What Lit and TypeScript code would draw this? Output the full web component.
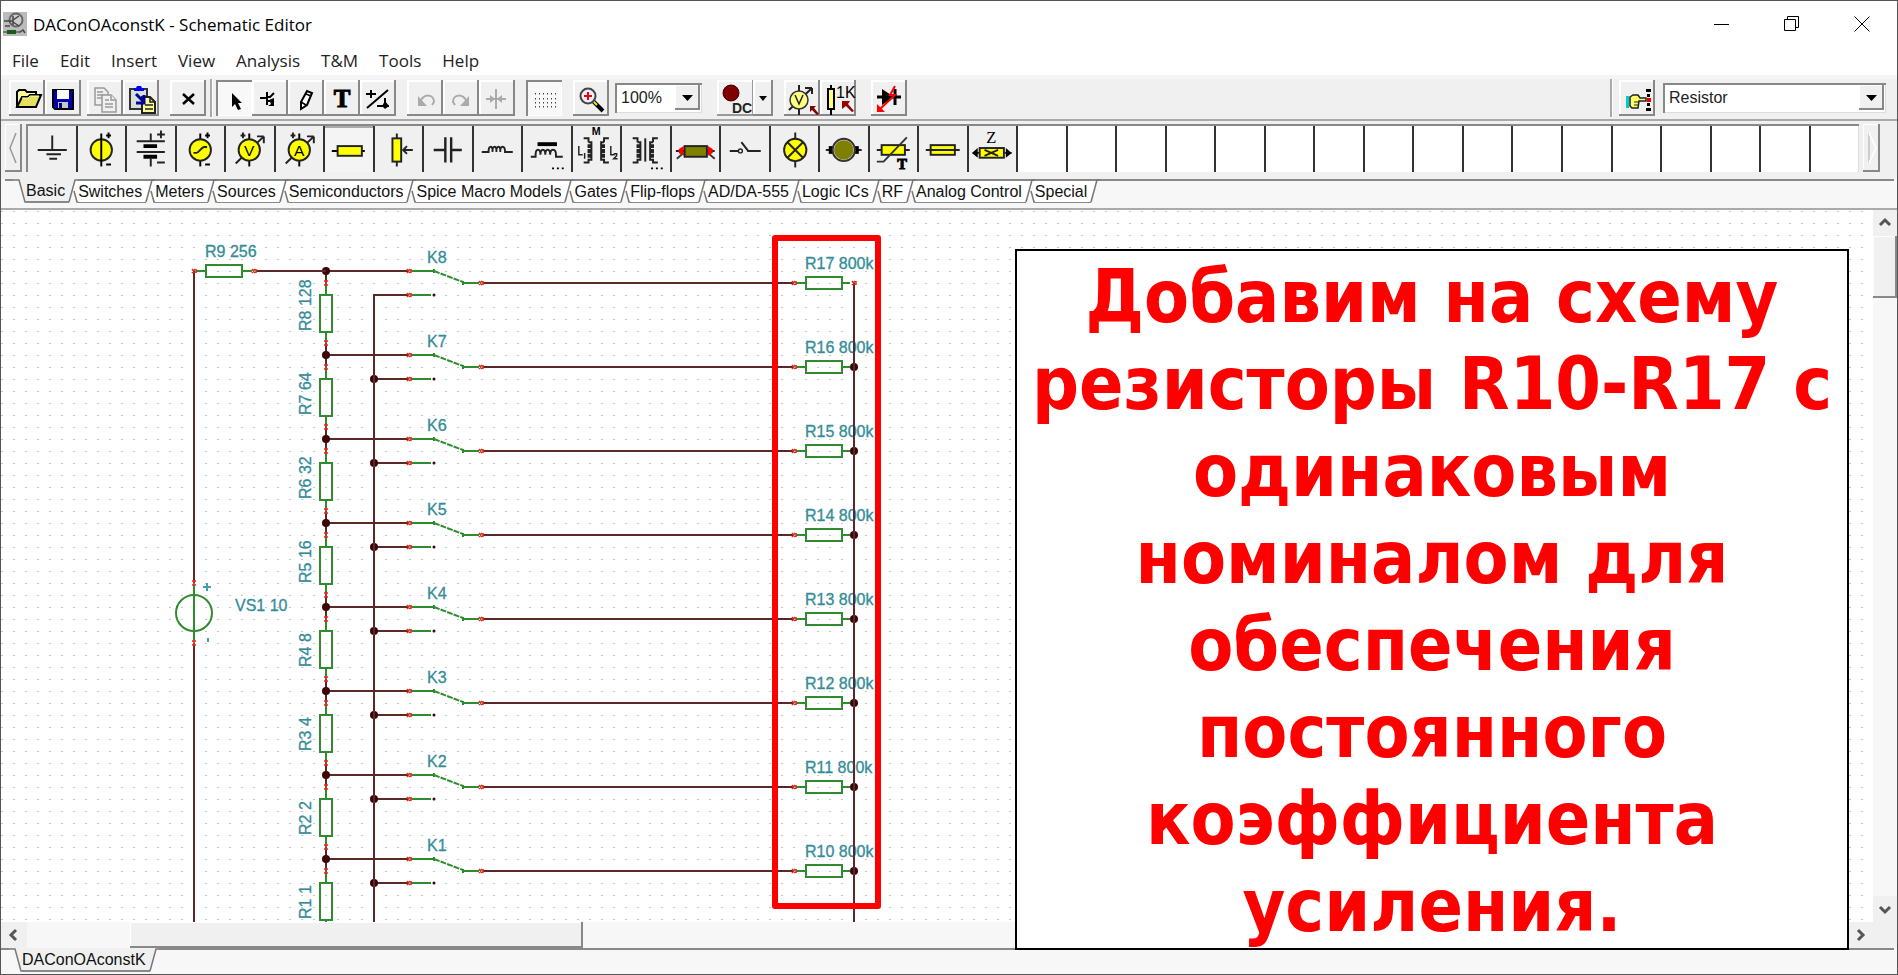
import { LitElement, html, svg, css, TemplateResult } from "lit";
import { customElement, property, state } from "lit/decorators.js";
import { classMap } from "lit/directives/class-map.js";

const MENUS = ["File", "Edit", "Insert", "View", "Analysis", "T&M", "Tools", "Help"];

const TABS = [
  "Basic", "Switches", "Meters", "Sources", "Semiconductors", "Spice Macro Models", "Gates",
  "Flip-flops", "AD/DA-555", "Logic ICs", "RF", "Analog Control", "Special",
];

const SLOTS = 37;

type Icon = { name: string; art: unknown; down?: boolean; off?: boolean };

/* ---------- tool bar glyphs, 36 x 36 ---------- */
const FILE_TOOLS: Icon[] = [
  { name: "Open", art: svg`<path d="M8 27V12l2-2h6l2 2h9v5" fill="#ffff99" stroke="#000" stroke-width="2"/><path d="M8 27l5-10h6l2-2h11l-5 12z" fill="#e6e060" stroke="#000" stroke-width="2"/><path d="M13 18h6l2-2h9" fill="none" stroke="#ffffc0"/>` },
  { name: "Save", art: svg`<path d="M8 10h20v19H10l-2-2z" fill="#0000b0" stroke="#000" stroke-width="2"/><path d="M12 10h12v9H12z" fill="#fff"/><path d="M13 22h10v6H13z" fill="#c8c8c8"/><path d="M14 23h3v5h-3z" fill="#000080"/>` },
];
const CLIP_TOOLS: Icon[] = [
  { name: "Copy", off: true, art: svg`<g fill="#f0f0f0" stroke="#999" stroke-width="1.5"><path d="M8 8h9l4 4v13H8z"/><path d="M10 12h6M10 15h8M10 18h8"/><path d="M15 15h9l5 5v12H15z"/><path d="M24 15v5h5M18 20h4M18 24h8M18 27h8"/></g>` },
  { name: "Paste", art: svg`<path d="M7 9h17v20H7z" fill="#d8e0d8" stroke="#333" stroke-width="2"/><path d="M11 11V8h2l1-2h4l1 2h2v3z" fill="#00f"/><path d="M19 17h8l5 5v11H19z" fill="#ffff99" stroke="#222" stroke-width="2"/><path d="M27 17v5h5M22 25h8M22 29h8" fill="none" stroke="#222" stroke-width="1.5"/><path d="M13 14l7 7m1-6v8h-8" fill="none" stroke="#0000a0" stroke-width="3"/>` },
];
const DELETE_TOOLS: Icon[] = [
  { name: "Delete", art: svg`<path d="M13 14l11 10M24 14L13 24" stroke="#000" stroke-width="2.5"/>` },
];
const DRAW_TOOLS: Icon[] = [
  { name: "Select", down: true, art: svg`<path d="M16 13v14l3-3 3 6 3-1-3-6h4z"/>` },
  { name: "Last component", art: svg`<path d="M8 18h6M15 12v13M15 17h3l4-4M15 21h4" fill="none" stroke="#000" stroke-width="2"/><path d="M17 20l5-2v8h-6l3-2z"/>` },
  { name: "Wire", art: svg`<path d="M13 22l6-11 5 2-5 12-6 4z" fill="#fff" stroke="#000" stroke-width="2"/><path d="M18 14l5 2M13 22l5 3" stroke="#000" stroke-width="1.5"/>` },
  { name: "Text", art: svg`<text x="18" y="27" text-anchor="middle" font-family="Liberation Serif" font-weight="700" font-size="25" stroke="#000" stroke-width="1">T</text>` },
  { name: "Hide or reconnect", art: svg`<path d="M7 28L28 10M6 14h4M12 14h4M11 10v8M17 26h12M25 18v8" stroke="#000" stroke-width="2" fill="none"/><path d="M25 21l4 5-4 3-3-3z"/>` },
];
const HISTORY_TOOLS: Icon[] = [
  { name: "Undo", off: true, art: svg`<path d="M13 22c4-9 14-8 14 0l-2 3" fill="none" stroke="#aaa" stroke-width="2"/><path d="M11 16v10h9z" fill="#aaa"/>` },
  { name: "Redo", off: true, art: svg`<path d="M24 22c-4-9-14-8-14 0l2 3" fill="none" stroke="#aaa" stroke-width="2"/><path d="M26 16v10h-9z" fill="#aaa"/>` },
  { name: "Mirror", off: true, art: svg`<path d="M7 19h20M17 9v20" stroke="#aaa" stroke-width="2"/><path d="M11 15l5 4-5 4zM23 15l-5 4 5 4z" fill="#aaa"/>` },
];
const GRID_TOOLS: Icon[] = [
  { name: "Grid", down: true, art: svg`${[9, 13, 17, 21, 25, 29].map((x) => [13, 18, 22, 26].map((y) => svg`<rect x=${x} y=${y} width="1" height="1.5" fill="#444"/>`))}` },
];
const ZOOM_TOOLS: Icon[] = [
  { name: "Zoom", art: svg`<path d="M20 21l10 10" stroke="#000" stroke-width="4"/><path d="M20 21l4 4" stroke="#ee0" stroke-width="2"/><circle cx="15" cy="16" r="7.5" fill="#eef" stroke="#444" stroke-width="2"/><path d="M11 16h8M15 12v8" stroke="#e00" stroke-width="2"/>` },
];
const PICK_TOOLS: Icon[] = [
  { name: "Interactive meter", art: svg`<path d="M15 5v30M5 30L28 8M28 8h-7M28 8v6" fill="none" stroke="#222" stroke-width="2"/><circle cx="15" cy="20" r="9" fill="#ffff80" stroke="#333" stroke-width="1.5"/><path d="M11 15l4 9 4-9" fill="none" stroke="#222" stroke-width="1.5"/><path d="M26 26h6l-2 2 5 6-2 1-5-5-2 2z" fill="#800000"/>` },
  { name: "Component value", art: svg`<path d="M11 5v30" stroke="#000" stroke-width="2"/><rect x="8" y="9" width="6" height="20" fill="#ffff80" stroke="#000" stroke-width="2"/><text x="16" y="18" font-family="Liberation Sans" font-size="16">1K</text><path d="M22 21h8l-2 3 6 7-2 1-6-6-4 3z" fill="#900"/>` },
];
const FAULT_TOOLS: Icon[] = [
  { name: "Fault", art: svg`<path d="M6 17h24M24 9v16" stroke="#000" stroke-width="3"/><path d="M11 9l12 8-12 8z"/><path d="M24 6l-5 9h5L9 29" fill="none" stroke="#f00" stroke-width="2"/><path d="M6 24v8h8z" fill="#f00"/>` },
];
const FIND_TOOLS: Icon[] = [
  { name: "Find component", art: svg`<path d="M7 16h3v12H7z" fill="#0cc"/><path d="M11 17l3-2h5l2 3h6v3h-7l-1 7h-6l-2-2z" fill="#ff6" stroke="#222" stroke-width="1.5"/><path d="M15 22h5M15 25h5" stroke="#222"/><path d="M27 9h5v3h-5zM28 14h3v3h-3zM28 23h3v3h-3zM27 28h5v3h-5z"/><path d="M28 18h4v4h-4z" fill="#e00"/>` },
];

/* ---------- component palette glyphs, 49 x 46 ---------- */
const leads = svg`<path d="M24 7v34" stroke="#000" stroke-width="2"/>`;
const polarity = svg`<path d="M29 9h5M31.500 6v6M29 39h5" stroke="#000" stroke-width="2"/>`;
const disc = svg`<circle cx="24" cy="24" r="11" fill="#ff0" stroke="#222" stroke-width="2"/>`;
const meter = (letter: string) => svg`${leads}<path d="M10 38L38 11M39 10h-7M39 10v7M15 9h5M17.500 6v6" stroke="#222" stroke-width="2" fill="none"/>${disc}<text x="24" y="30" text-anchor="middle" font-family="Liberation Sans" font-size="16">${letter}</text>`;
const coils = svg`<path d="M11 12h5v4M16 16h3v3h-3v2h3v3h-3v2h3v3h-3v2h3v3h-3v3h-5M37 12h-5v4M32 16h-3v3h3v2h-3v3h3v2h-3v3h3v2h-3v3h3v3h5" fill="none" stroke="#222" stroke-width="2"/>`;

const PARTS: Icon[] = [
  { name: "Ground", art: svg`<path d="M25 9v15M10 24h30M19 28.500h15M22 33h8" stroke="#222" stroke-width="2"/>` },
  { name: "Current source", art: svg`${disc}${leads}${polarity}` },
  { name: "Battery", art: svg`<path d="M24.500 7v8M24.500 33v8M10 15h29M10 26h29M31 8h8M35 4v8M31 37h8" stroke="#222" stroke-width="2"/><path d="M17 20h14M17 31h14" stroke="#000" stroke-width="4"/>` },
  { name: "Voltage generator", art: svg`${leads}${disc}${polarity}<path d="M17 27h3c3 0 5-6 8-6h3" fill="none" stroke="#222" stroke-width="2"/>` },
  { name: "Voltmeter", art: meter("V") },
  { name: "Ammeter", art: meter("A") },
  { name: "Resistor", down: true, art: svg`<path d="M7 25h34" stroke="#000" stroke-width="2"/><rect x="13" y="20" width="25" height="10" fill="#ff0" stroke="#222" stroke-width="2"/>` },
  { name: "Potentiometer", art: svg`<path d="M22.500 7v34M39 24H29M33 20l-4 4 4 4" fill="none" stroke="#222" stroke-width="2"/><rect x="18" y="12" width="9" height="24" fill="#ff0" stroke="#222" stroke-width="2"/>` },
  { name: "Capacitor", art: svg`<path d="M10 24h12M28 24h11M22 11v26M28 11v26" stroke="#222" stroke-width="2.500"/>` },
  { name: "Inductor", art: svg`<path d="M8 26h7c0-7 5-7 4 0c0-7 5-7 4 0c0-7 5-7 4 0c0-7 5-7 5 0h8" fill="none" stroke="#222" stroke-width="2"/>` },
  { name: "Iron-core inductor", art: svg`<path d="M15 18h20" stroke="#000" stroke-width="4"/><path d="M8 31h5v-2c0-7 5-7 5 0c0-7 5-7 5 0c0-7 5-7 5 0c0-7 6-7 6 0v2h7" fill="none" stroke="#222" stroke-width="2"/><path d="M30 43h2M35 43h2M40 43h2" stroke="#000" stroke-width="2"/>` },
  { name: "Coupled inductors", art: svg`${coils}<text x="24" y="9" text-anchor="middle" font-family="Liberation Sans" font-weight="700" font-size="11">M</text><path d="M6 20v9h4M12 27v6M39 20v9h4M42 28h3v2l-3 3h4" fill="none" stroke="#222" stroke-width="1.500"/>` },
  { name: "Transformer", art: svg`${coils}<path d="M24 12v24" stroke="#222" stroke-width="2"/><path d="M30 43h2M35 43h2M40 43h2" stroke="#000" stroke-width="2"/>` },
  { name: "Relay coil", art: svg`<path d="M4 25h40" stroke="#222" stroke-width="2"/><path d="M5 33l7-6M44 33l-7-6" stroke="#333" stroke-width="2"/><path d="M12 20l-5 3v4l5 3zM37 20l5 3v4l-5 3z" fill="#f00"/><rect x="13" y="20" width="23" height="11" fill="#808000" stroke="#222" stroke-width="2"/>` },
  { name: "Switch", art: svg`<path d="M9 25h10M27 25h14M28 25l-7-9" stroke="#222" stroke-width="2"/><circle cx="20" cy="25" r="2" fill="#fff" stroke="#222" stroke-width="1.500"/>` },
  { name: "Lamp", art: svg`<path d="M25 6v36" stroke="#222" stroke-width="2"/><circle cx="25" cy="24" r="11.500" fill="#ff0" stroke="#222" stroke-width="2"/><path d="M17 16l16 16M33 16L17 32" stroke="#222" stroke-width="2"/>` },
  { name: "Motor", art: svg`<path d="M6 24h37" stroke="#222" stroke-width="2"/><path d="M9 20h31v8H9z"/><circle cx="24.500" cy="24" r="11.500" fill="#ddd" stroke="#333" stroke-width="2"/><circle cx="24.500" cy="24" r="10" fill="#808000"/>` },
  { name: "Thermistor", art: svg`<path d="M7 24h34" stroke="#222" stroke-width="2"/><rect x="12" y="19" width="24" height="10" fill="#ff0" stroke="#222" stroke-width="2"/><path d="M7 36h7L38 11" fill="none" stroke="#333" stroke-width="2"/><text x="33" y="44" text-anchor="middle" font-family="Liberation Serif" font-weight="700" font-size="15" stroke="#000" stroke-width="1">T</text>` },
  { name: "Fuse", art: svg`<rect x="12" y="19" width="25" height="10" fill="#ff0" stroke="#222" stroke-width="2"/><path d="M7 24h35" stroke="#222" stroke-width="2"/>` },
  { name: "Impedance", art: svg`<text x="23" y="17" text-anchor="middle" font-family="Liberation Serif" font-size="17">Z</text><path d="M4 27h40" stroke="#222" stroke-width="2"/><path d="M9 22v10l-6-5zM38 22v10l6-5z"/><rect x="11" y="22" width="25" height="10" fill="#ff0" stroke="#222" stroke-width="2"/><path d="M16 24l14 6M30 24l-14 6" stroke="#222" stroke-width="2"/>` },
];

@customElement("tool-group")
class ToolGroup extends LitElement {
  @property({ attribute: false }) items: Icon[] = [];
  static styles = css`
    :host { display: flex; }
    .tool { width: 36px; height: 36px; padding: 0; border: 0; background: #f0f0f0;
      box-shadow: inset -2px -2px #888, inset 2px 2px #fff; }
    .tool.down { background: #f8f8f8; box-shadow: inset 2px 2px #888, inset -1px -1px #fff; }
    .art { display: block; width: 36px; height: 36px; }
  `;
  render() {
    return this.items.map((t) => html`<button class=${classMap({ tool: true, down: !!t.down })}
      aria-label=${t.name} aria-pressed=${t.down ? "true" : "false"} ?disabled=${!!t.off}>
      <svg class="art" viewBox="0 0 36 36">${t.art}</svg></button>`);
  }
}

@customElement("schematic-sheet")
class SchematicSheet extends LitElement {
  static styles = css`
    :host { display: block; min-width: 0; overflow: hidden; background: #fff; }
    .sheet { display: block; width: 100%; height: 100%; }
    .wire { fill: none; stroke: #5a2828; stroke-width: 2; }
    .part { fill: none; stroke: #2e8c2e; stroke-width: 2; }
    .arm { fill: none; stroke: #2e8c2e; stroke-width: 2; stroke-dasharray: 6 1; }
    .pin { fill: none; stroke: #e02a1a; stroke-width: 1.5; }
    .node { fill: #3c0606; }
    .dot { fill: #c4c4c4; }
    .label { font: 16px "Liberation Sans", Arial, sans-serif; fill: #338c98; stroke: #338c98; stroke-width: 0.3; }
    .mark { fill: none; stroke: #3fa0b0; stroke-width: 2; }
  `;
  private pinH(x: number, y: number) {
    return svg`<path class="pin" d="M${x - 2} ${y - 2}l3 4M${x - 2} ${y + 2}l3 -4M${x + 2} ${y - 2}v4"/>`;
  }
  private pinV(x: number, y: number) {
    return svg`<path class="pin" d="M${x - 2} ${y - 2}h4M${x - 2} ${y + 2}h4M${x} ${y - 3}v6"/>`;
  }
  private stage(i: number) {
    const y = 271 + 84 * i;
    const n = 8 - i;
    return svg`
      <path class="wire" d="M326 ${y}H408M374 ${y + 24}H408M483 ${y + 12}H793M326 ${y}v12M326 ${y + 72}v12"/>
      <path class="part" d="M411 ${y}H434M411 ${y + 24}H431M463 ${y + 12}H479M326 ${y + 12}v12M326 ${y + 61}v11M320 ${y + 24}h12v37h-12zM463 ${y + 10}v4M434 ${y - 2}v4"/>
      <path class="arm" d="M434 ${y}L463 ${y + 11}"/>
      <circle class="node" cx="434" cy=${y + 24} r="1.500"/>
      ${this.pinH(409, y)}${this.pinH(409, y + 24)}${this.pinH(481, y + 12)}
      ${this.pinV(326, y + 12)}${this.pinV(326, y + 72)}
      <circle class="node" cx="326" cy=${y} r="4"/>
      ${i > 0 ? svg`<circle class="node" cx="374" cy=${y + 24} r="4"/><circle class="node" cx="854" cy=${y + 12} r="4"/>` : ""}
      <path class="part" d="M796 ${y + 12}h9M842 ${y + 12}h8M806 ${y + 6}h36v12h-36z"/>
      ${this.pinH(794, y + 12)}
      <text class="label" x="427" y=${y - 8}>K${n}</text>
      <text class="label" x="805" y=${y - 2}>R${n + 9} 800k</text>
      <text class="label" transform="translate(311 ${y + 60}) rotate(-90)">R${n} ${2 ** (n - 1)}</text>`;
  }
  render() {
    return html`<svg class="sheet" role="img" aria-label="Circuit schematic">
      <defs><pattern id="dots" width="12" height="12" patternUnits="userSpaceOnUse">
        <rect class="dot" x="0" y="1" width="2" height="1"/></pattern></defs>
      <rect width="100%" height="100%" fill="url(#dots)"/>
      <g transform="translate(-1 -210)">
        ${[0, 1, 2, 3, 4, 5, 6, 7].map((i) => this.stage(i))}
        <path class="wire" d="M194 271V583M194 643V1200M256 271H326M374 294V1200M854 283V1200"/>
        <path class="part" d="M196 271h9M242 271h10M206 265h36v12h-36zM194 586v54"/>
        <circle class="part" cx="194" cy="613" r="18"/>
        ${this.pinH(194, 271)}${this.pinH(254, 271)}${this.pinH(854, 283)}
        ${this.pinV(194, 583)}${this.pinV(194, 643)}
        <path class="mark" d="M203 587h8M207 583v8M208 638v4"/>
        <text class="label" x="205" y="257">R9 256</text>
        <text class="label" x="235" y="611">VS1 10</text>
        <rect x="775" y="238" width="103" height="668" fill="none" stroke="#f00" stroke-width="6" stroke-linejoin="round"/>
      </g>
    </svg>`;
  }
}

@customElement("app-root")
class AppRoot extends LitElement {
  @state() private tab = 0;

  static styles = css`
    :host { display: block; height: 100vh; }
    .window { box-sizing: border-box; height: 100%; display: flex; flex-direction: column; overflow: hidden;
      border: 1px solid #555; background: #fff; color: #111; font: 16px "Liberation Sans", Arial, sans-serif; }
    button, select { font: inherit; color: inherit; }
    .title { display: flex; align-items: center; height: 46px; padding-left: 2px; gap: 6px;
      font: 17px "Open Sans", "Segoe UI", sans-serif; color: #000; }
    .app { width: 24px; height: 24px; }
    .name { flex: 1; font: inherit; margin: 0; }
    .controls { display: flex; }
    .control { width: 70px; height: 46px; padding: 0; border: 0; background: none; display: grid; place-items: center; }
    .menu { display: flex; height: 28px; padding-left: 1px; border-bottom: 4px solid #f5f5f5;
      font: 17px "Open Sans", "Segoe UI", sans-serif; }
    .menu-item { padding: 0 11px 0 10px; border: 0; background: none; color: #222; line-height: 28px; }
    .tools { display: flex; align-items: center; height: 38px; padding: 0 11px 2px 8px; background: #f0f0f0;
      border-bottom: 2px solid #aaa; }
    .g6 { margin-left: 6px; }
    .g11 { margin-left: 11px; }
    .g15 { margin-left: 15px; }
    .spacer { flex: 1; }
    .rule { width: 2px; align-self: stretch; background: #aaa; box-shadow: 1px 0 #fff; margin: 0 4px; }
    .rule.wide { margin-right: 7px; }
    .combo { display: flex; position: relative; box-sizing: border-box; height: 30px; padding: 2px 2px 4px;
      background: #fff; box-shadow: inset 2px 2px #888, inset -1px -1px #ddd; }
    .combo.zoom { width: 87px; margin-left: 6px; }
    .combo.part { width: 223px; margin-left: 8px; }
    .combo select { appearance: none; flex: 1; min-width: 0; border: 0; padding: 0 0 0 4px; background: none; color: #222; }
    .drop { position: absolute; right: 2px; top: 2px; width: 25px; height: 25px; background: #f0f0f0; pointer-events: none;
      box-shadow: inset -2px -2px #888, inset 1px 1px #fff; }
    .dc { display: flex; margin-left: 15px; }
    .dc button { height: 36px; padding: 0; border: 0; background: #f0f0f0; box-shadow: inset -2px -2px #888, inset 2px 2px #fff; }
    .dc .run { width: 36px; box-shadow: inset -1px -2px #999, inset 2px 2px #fff; }
    .dc .more { width: 20px; }
    .dc svg { display: block; }
    .palette { display: flex; height: 48px; padding: 3px 17px 7px 4px; gap: 4px; background: #f0f0f0; }
    .page { width: 17px; padding: 0; border: 0; background: #f0f0f0; box-shadow: inset -2px -2px #888, inset 1px 1px #fff; }
    .page svg { display: block; }
    .slots { flex: 1; display: flex; border-top: 2px solid #888; border-left: 2px solid #888; background: #fff; }
    .slot { flex: 1 1 0; min-width: 0; padding: 0; border: 0; border-right: 2px solid #333; background: #fff; }
    .slot.full { background: #f0f0f0; }
    .slot.down { box-shadow: inset 0 2px #aaa; background: #f4f4f4; }
    .slot:last-child { border-right: 1px solid #ddd; }
    .slot svg { display: block; width: 100%; height: 46px; }
    .tabs { display: flex; height: 29px; padding-left: 4px; border-bottom: 2px solid #aaa; background: #f7f7f7; }
    .tab { height: 24px; box-sizing: border-box; padding: 0; border: 0; border-top: 2px solid #888; border-bottom: 1px solid #888;
      background: #fff; line-height: 20px; white-space: nowrap; }
    .tab.on { border-top-color: #f0f0f0; border-bottom-width: 2px; background: #f0f0f0; }
    .slant { width: 13px; height: 24px; flex: none; }
    .rest { flex: 1; height: 0; border-top: 2px solid #888; margin-right: 3px; }
    .work { position: relative; flex: 1; min-height: 0; display: grid;
      grid-template-columns: minmax(0, 1fr) 24px; grid-template-rows: minmax(0, 1fr) 26px; background: #f0f0f0; }
    .bar { display: flex; background: #f7f7f7; }
    .bar.v { flex-direction: column; }
    .arrow { flex: none; display: grid; place-items: center; padding: 0; border: 0; background: #f0f0f0; }
    .bar.v .arrow { height: 26px; }
    .bar.h .arrow { width: 26px; }
    .thumb { background: #f0f0f0; box-shadow: inset -2px -2px #888, inset 1px 1px #fff; }
    .bar.v .thumb { height: 62px; }
    .bar.h .thumb { width: 453px; margin-left: 103px; }
    .note { position: absolute; left: 1014px; right: 48px; top: 39px; bottom: -2px; box-sizing: border-box; margin: 0;
      border: 2px solid #000; background: #fff; color: #f00; text-align: center;
      font: 700 73px/87px "DejaVu Sans Condensed", "DejaVu Sans", sans-serif; z-index: 1; padding: 2px 8px; }
    .sheets { display: flex; height: 26px; flex: none; background: #f7f7f7; }
    .lead { width: 8px; border-top: 2px solid #888; height: 0; }
    .sheets .tab { border-top-color: #f0f0f0; }
    .title, .menu, .tools, .palette, .tabs { flex: none; }
  `;

  private slant(left: boolean, right: boolean, leftOn: boolean, rightOn: boolean): TemplateResult {
    return html`<svg class="slant" viewBox="0 0 13 24" aria-hidden="true">
      ${right ? svg`<path d="M5 0H13V23L9 12z" fill=${rightOn ? "#f0f0f0" : "#fff"}/>` : ""}
      ${left ? svg`<path d="M0 0H9L3 23H0z" fill=${leftOn ? "#f0f0f0" : "#fff"}/>` : ""}
      ${left && !leftOn ? svg`<path d="M0 1H13" stroke="#888" stroke-width="2"/>` : ""}
      ${left ? svg`<path d="M0 ${leftOn ? 23 : 23.5}H4" stroke="#888" stroke-width=${leftOn ? 2 : 1}/><path d="M4 23L10 1H13" fill="none" stroke="#777" stroke-width="1.500"/>` : ""}
      ${right ? svg`<path d=${left ? "M9 12L12 23H13" : "M0 1H6L12 23H13"} fill="none" stroke="#777" stroke-width="1.500"/>` : ""}
    </svg>`;
  }

  private arrow(name: string, turn: number) {
    return html`<button class="arrow" aria-label=${name}><svg width="14" height="14" viewBox="0 0 14 14">
      <path d="M2 9l5-5 5 5" transform="rotate(${turn} 7 7)" fill="none" stroke="#555" stroke-width="3"/></svg></button>`;
  }

  render() {
    return html`<div class="window">
      <header class="title">
        <svg class="app" viewBox="0 0 24 24"><rect width="24" height="24" fill="#bbb"/><circle cx="13" cy="8" r="6.500" fill="#ccc" stroke="#666" stroke-width="2"/><path d="M1 9h9M10 4v9M10 8l6-4M10 10l6 4M2 14h5M17 20l3-2 2 3" fill="none" stroke="#444" stroke-width="1.500"/><path d="M4 18h9v4H4z" fill="#175c17"/><path d="M0 20h4M13 20h5" stroke="#333"/></svg>
        <h1 class="name">DAConOAconstK - Schematic Editor</h1>
        <div class="controls">
          <button class="control" aria-label="Minimize"><svg width="16" height="16"><path d="M0 8.500h15" stroke="#000"/></svg></button>
          <button class="control" aria-label="Restore"><svg width="16" height="16"><path d="M.5 3.500h11v11H.5zM3.500 3V.5h11v11H12" fill="none" stroke="#000"/></svg></button>
          <button class="control" aria-label="Close"><svg width="16" height="16"><path d="M.5.5l15 15M15.500.5l-15 15" stroke="#000"/></svg></button>
        </div>
      </header>
      <nav class="menu">${MENUS.map((m) => html`<button class="menu-item">${m}</button>`)}</nav>
      <div class="tools">
        <tool-group .items=${FILE_TOOLS}></tool-group>
        <tool-group class="g6" .items=${CLIP_TOOLS}></tool-group>
        <tool-group class="g11" .items=${DELETE_TOOLS}></tool-group>
        <span class="rule"></span>
        <tool-group .items=${DRAW_TOOLS}></tool-group>
        <tool-group class="g11" .items=${HISTORY_TOOLS}></tool-group>
        <tool-group class="g11" .items=${GRID_TOOLS}></tool-group>
        <tool-group class="g11" .items=${ZOOM_TOOLS}></tool-group>
        <span class="combo zoom"><select aria-label="Zoom"><option>100%</option></select>
          <svg class="drop" viewBox="0 0 25 25" aria-hidden="true"><path d="M7 10h11l-5.500 6z"/></svg></span>
        <span class="dc">
          <button class="run" aria-label="Interactive DC mode"><svg width="36" height="36"><circle cx="14" cy="13" r="8" fill="#800000" stroke="#400"/><text x="15" y="33" font-family="Liberation Sans Narrow, Liberation Sans" font-weight="700" font-size="14" fill="#222">DC</text></svg></button>
          <button class="more" aria-label="Interactive modes"><svg width="20" height="36"><path d="M6 16h8l-4 5z"/></svg></button>
        </span>
        <tool-group class="g11" .items=${PICK_TOOLS}></tool-group>
        <tool-group class="g15" .items=${FAULT_TOOLS}></tool-group>
        <span class="spacer"></span>
        <span class="rule wide"></span>
        <tool-group .items=${FIND_TOOLS}></tool-group>
        <span class="combo part"><select aria-label="Component"><option>Resistor</option></select>
          <svg class="drop" viewBox="0 0 25 25" aria-hidden="true"><path d="M7 10h11l-5.500 6z"/></svg></span>
      </div>
      <div class="palette">
        <button class="page" aria-label="Previous components"><svg width="17" height="48"><path d="M11 9L5 24l6 15" fill="none" stroke="#999" stroke-width="1.500"/></svg></button>
        <div class="slots">${Array.from({ length: SLOTS }, (_, i) => {
          const p = PARTS[i];
          return html`<button class=${classMap({ slot: true, full: !!p, down: !!p?.down })} aria-label=${p ? p.name : "Empty slot"}>
            ${p ? html`<svg viewBox="0 0 49 46">${p.art}</svg>` : ""}</button>`;
        })}</div>
        <button class="page" aria-label="Next components"><svg width="17" height="48"><path d="M6 39V9" stroke="#aaa"/><path d="M6 9l7 15-7 15" fill="none" stroke="#fff" stroke-width="1.500"/></svg></button>
      </div>
      <div class="tabs" role="tablist">
        <span class="lead"></span>${this.slant(false, true, false, this.tab === 0)}
        ${TABS.map((t, i) => html`<button role="tab" class=${classMap({ tab: true, on: i === this.tab })}
          aria-selected=${i === this.tab ? "true" : "false"} @click=${() => (this.tab = i)}>${t}</button>${this.slant(true, i < TABS.length - 1, i === this.tab, i + 1 === this.tab)}`)}
        <span class="rest"></span>
      </div>
      <main class="work">
        <schematic-sheet></schematic-sheet>
        <div class="bar v">${this.arrow("Scroll up", 0)}<div class="thumb"></div><span class="spacer"></span>${this.arrow("Scroll down", 180)}</div>
        <div class="bar h">${this.arrow("Scroll left", -90)}<div class="thumb"></div><span class="spacer"></span>${this.arrow("Scroll right", 90)}</div>
        <p class="note">Добавим на схему резисторы R10-R17 с одинаковым номиналом для обеспечения постоянного коэффициента усиления.</p>
      </main>
      <div class="sheets" role="tablist">
        <span class="lead"></span>${this.slant(false, true, false, true)}
        <button role="tab" class="tab on" aria-selected="true">DAConOAconstK</button>${this.slant(true, false, true, false)}
        <span class="rest"></span>
      </div>
    </div>`;
  }
}
